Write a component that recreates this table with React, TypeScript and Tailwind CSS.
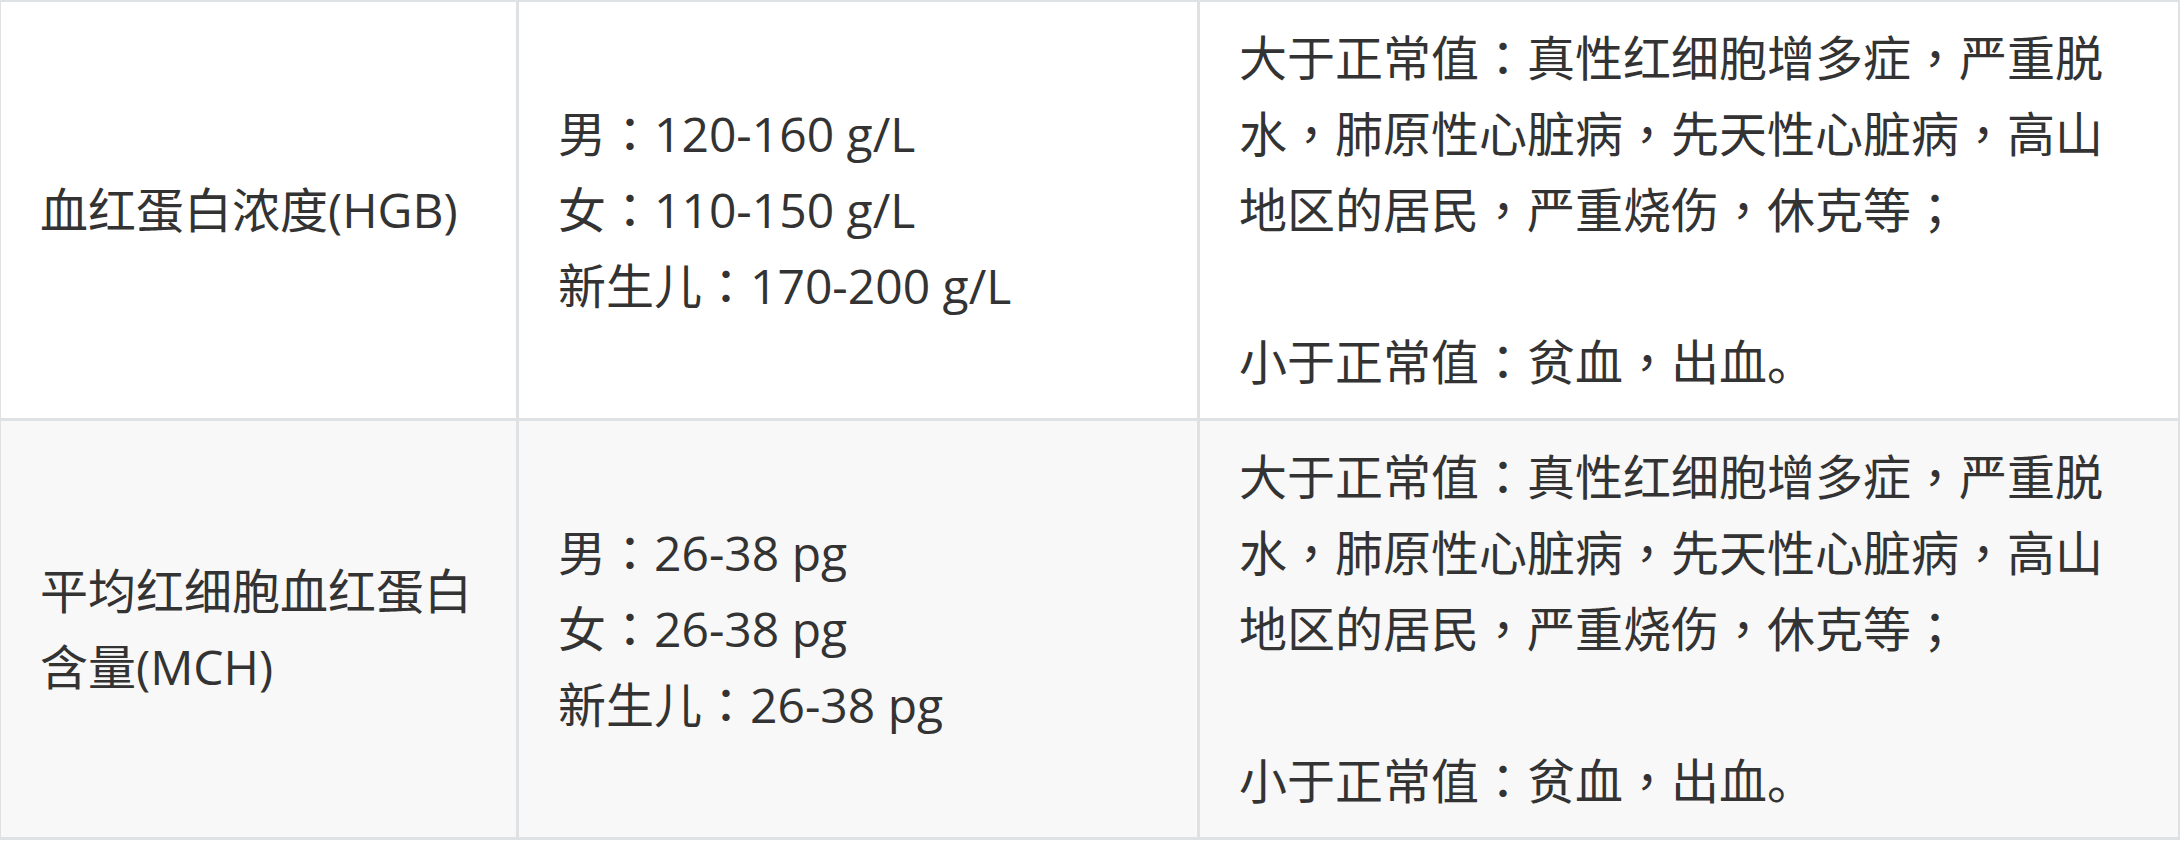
import React from 'react';

interface Row {
  name: string;
  ranges: string[];
  high: string;
  low: string;
}

const ROWS: Row[] = [
  {
    name: '血红蛋白浓度(HGB)',
    ranges: ['男：120-160 g/L', '女：110-150 g/L', '新生儿：170-200 g/L'],
    high: '大于正常值：真性红细胞增多症，严重脱水，肺原性心脏病，先天性心脏病，高山地区的居民，严重烧伤，休克等；',
    low: '小于正常值：贫血，出血。'
  },
  {
    name: '平均红细胞血红蛋白含量(MCH)',
    ranges: ['男：26-38 pg', '女：26-38 pg', '新生儿：26-38 pg'],
    high: '大于正常值：真性红细胞增多症，严重脱水，肺原性心脏病，先天性心脏病，高山地区的居民，严重烧伤，休克等；',
    low: '小于正常值：贫血，出血。'
  }
];

// full-width ：，； sit centred in the original, like the TC glyphs
const CENTRED = /([：，；])/;

const Text = ({ value }: { value: string }) => (
  <>
    {value.split(CENTRED).map((part, i) =>
      CENTRED.test(part) ? (
        <span key={i} className="leading-none" style={{ fontFamily: '"Noto Sans CJK TC", sans-serif' }}>
          {part}
        </span>
      ) : (
        <React.Fragment key={i}>{part}</React.Fragment>
      )
    )}
  </>
);

export default function App() {
  return (
    <div
      className="w-[2180px] h-[841px] overflow-hidden bg-white text-[#333333] text-[48px] leading-[76px]"
      style={{ fontFamily: '"Open Sans", "Noto Sans CJK SC", sans-serif' }}
    >
      <div className="-ml-[2px] -mt-[1px] w-[2183px] grid grid-cols-[515px_678px_978px] gap-[3px] p-[3px] bg-[#dfe2e5]">
        {ROWS.map((row, idx) => {
          const bg = idx % 2 === 1 ? 'bg-[#f8f8f8]' : 'bg-white';
          return (
            <React.Fragment key={idx}>
              <div className={`${bg} px-[39px] py-[18px] flex items-center`}>
                <div>{row.name}</div>
              </div>
              <div className={`${bg} px-[39px] py-[18px] flex items-center`}>
                <div>
                  {row.ranges.map((r) => (
                    <div key={r}>
                      <Text value={r} />
                    </div>
                  ))}
                </div>
              </div>
              <div className={`${bg} px-[39px] py-[18px] flex items-center`}>
                <div>
                  <Text value={row.high} />
                  <br />
                  <br />
                  <Text value={row.low} />
                </div>
              </div>
            </React.Fragment>
          );
        })}
      </div>
    </div>
  );
}
